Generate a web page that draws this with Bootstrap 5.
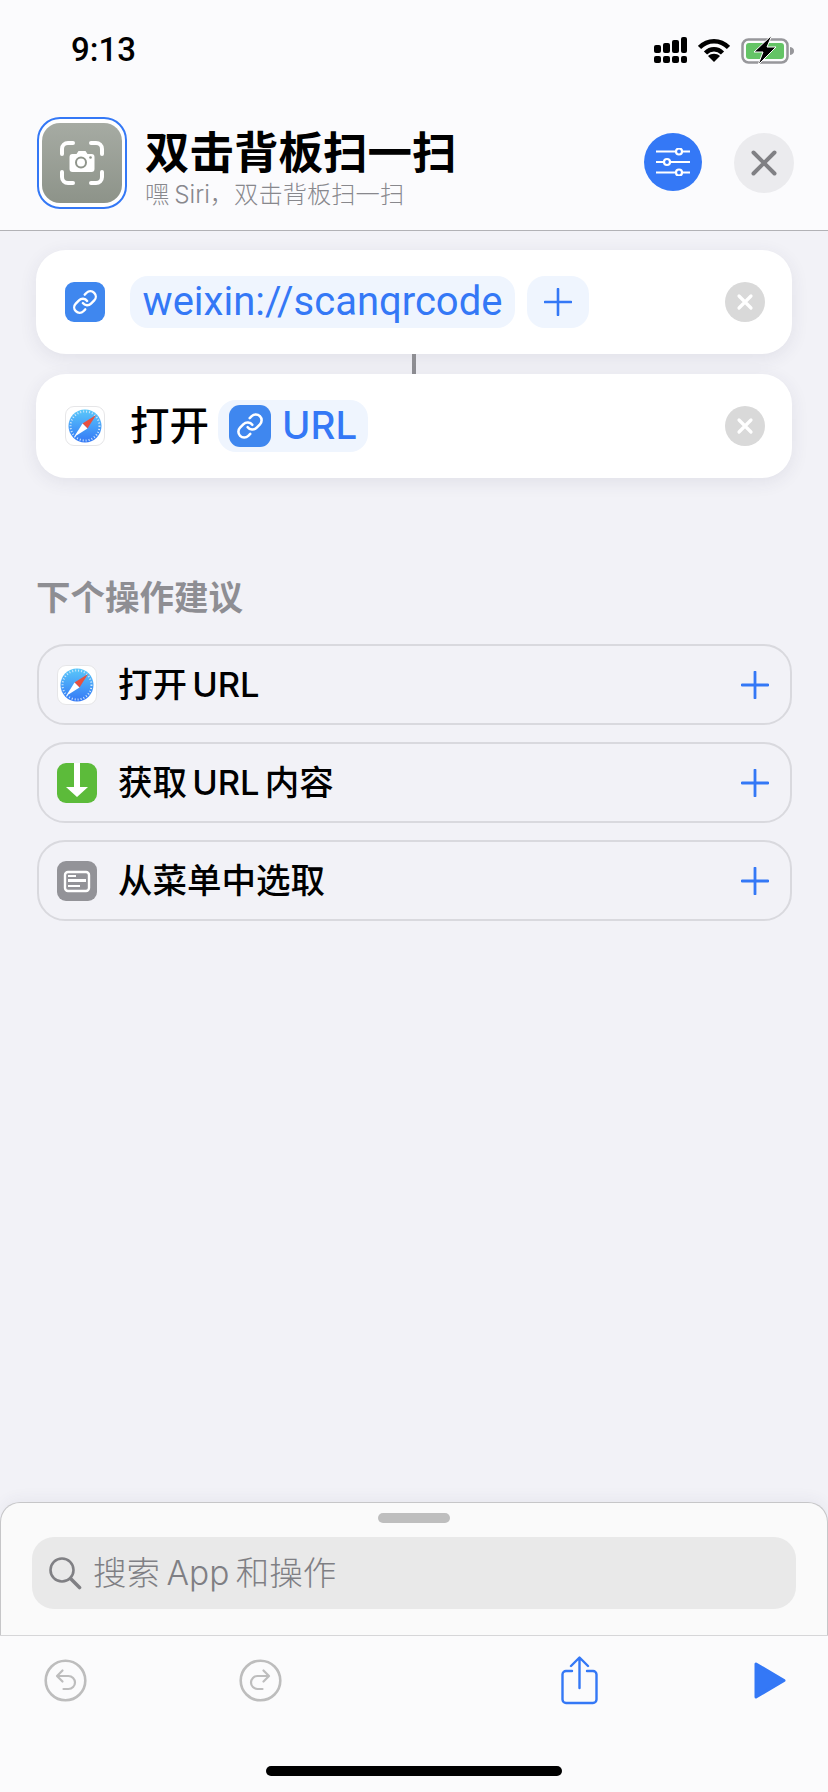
<!DOCTYPE html>
<html lang="zh-CN">
<head>
    <meta charset="UTF-8">
    <meta name="viewport" content="width=device-width, initial-scale=1.0">
    <title>双击背板扫一扫</title>
    <link href="https://cdn.jsdelivr.net/npm/bootstrap@5.3.0/dist/css/bootstrap.min.css" rel="stylesheet">
    <style>
        body {
            background: #f2f2f7;
            font-family: Inter, "Noto Sans CJK SC", sans-serif;
            color: #000;
        }
        .page-wrap { height: 1792px; }

        /* header */
        .top-head {
            height: 231px;
            background: #fbfbfd;
            border-bottom: 1px solid #b2b2b6;
        }
        .status-row { height: 117px; padding: 0 33px 0 71px; }
        .status-time { font-family: Roboto, sans-serif; font-size: 33px; font-weight: 500; line-height: 100px; }
        .status-icons { height: 100px; gap: 11px; }
        .head-row { padding: 0 34px 0 37px; height: 92px; }
        .app-tile {
            width: 90px;
            height: 92px;
            border: 2px solid #3478f6;
            border-radius: 23px;
            padding: 4px 3px;
            background: #fff;
            flex-shrink: 0;
        }
        .app-tile-inner {
            width: 100%;
            height: 100%;
            border-radius: 18px;
            background: linear-gradient(#a6aba3, #8d9389);
        }
        .head-text { margin-left: 18px; }
        .head-title { font-size: 44.5px; font-weight: 700; line-height: 56px; margin-top: 7px; }
        .head-sub { font-size: 24.3px; line-height: 30px; color: #88888d; margin-top: -2px; font-weight: 300; word-spacing: -2px; }
        .round-btn { width: 60px; height: 60px; flex-shrink: 0; }
        .btn-tune { width: 58px; height: 58px; background: #3478f6; margin-right: 32px; margin-top: -2px; }
        .btn-shut { background: #ebebee; }

        /* action cards */
        .flow-area { padding: 19px 36px 0; }
        .step-card {
            height: 104px;
            background: #fff;
            border-radius: 30px;
            padding: 0 27px 0 29px;
            box-shadow: 0 4px 18px rgba(60, 60, 90, .09);
        }
        .step-link { width: 4px; height: 20px; background: #8e8e93; }
        .tile-40 { width: 40px; height: 40px; flex-shrink: 0; }
        .tile-link { background: #3f87ef; border-radius: 9px; }
        .step-pill {
            height: 52px;
            background: #eff5fe;
            border-radius: 18px;
            color: #3478f6;
        }
        .pill-url { width: 385px; margin-left: 25px; font-family: Roboto, sans-serif; font-size: 40px; }
        .pill-plus { width: 62px; margin-left: 12px; }
        .step-word { font-size: 39.5px; margin-left: 25px; line-height: 52px; font-weight: 500; }
        .pill-var { width: 150px; margin-left: 9px; padding-left: 11px; font-weight: 500; font-size: 38.5px; }
        .tile-var { width: 42px; height: 42px; background: #3f87ef; border-radius: 11px; margin-right: 11px; }
        .step-drop { width: 40px; height: 40px; background: #d9d9d9; flex-shrink: 0; }

        /* suggestions */
        .hint-head {
            font-size: 34.5px;
            font-weight: 700;
            color: #8e8e93;
            line-height: 40px;
            margin: 100px 0 26px 0;
        }
        .hint-row {
            height: 81px;
            margin: 0 0 17px 1px;
            border: 2px solid #d9d9de;
            border-radius: 28px;
            padding: 0 21px 0 18px;
        }
        .hint-name { font-size: 34.5px; font-weight: 500; margin-left: 21px; word-spacing: -4px; }
        .tile-green { background: #5cbb3a; border-radius: 9px; }
        .tile-gray { background: #939398; border-radius: 9px; }

        /* search sheet */
        .search-sheet {
            height: 133px;
            background: #fafafa;
            border: 1px solid #c6c6c8;
            border-bottom: 0;
            border-radius: 20px 20px 0 0;
            padding: 0 31px;
            box-shadow: 0 -4px 14px rgba(60, 60, 90, .05);
        }
        .sheet-grip { width: 72px; height: 10px; background: #bebebe; margin: 10px auto 14px; }
        .search-field {
            height: 72px;
            background: #e9e9e9;
            border-radius: 22px;
            padding-left: 16px;
            font-size: 33.5px;
            font-weight: 300;
            color: #7f7f84;
        }
        .search-word { margin-left: 11px; word-spacing: -3px; }

        /* bottom toolbar */
        .tool-bar { height: 157px; background: #fbfbfc; border-top: 1px solid #d6d6d8; }
        .tool-row { height: 88px; padding: 0 42px 0 44px; }
        .tool-left { gap: 152px; }
        .tool-right { gap: 156px; }
        .home-bar { width: 296px; height: 10px; background: #000; margin: 42px auto 0; }
    </style>
</head>
<body>
<div class="page-wrap d-flex flex-column">

    <!-- Header -->
    <header class="top-head flex-shrink-0">
        <div class="status-row d-flex justify-content-between align-items-start">
            <span class="status-time">9:13</span>
            <div class="status-icons d-flex align-items-center">
                <svg width="33" height="26" viewBox="0 0 33 26">
                    <g fill="#000">
                        <rect x="0" y="8" width="7" height="8" rx="2"/><rect x="0" y="19" width="7" height="7" rx="2"/>
                        <rect x="9" y="6" width="7" height="10" rx="2"/><rect x="9" y="19" width="7" height="7" rx="2"/>
                        <rect x="18" y="3" width="7" height="13" rx="2"/><rect x="18" y="19" width="7" height="7" rx="2"/>
                        <rect x="27" y="0" width="6" height="16" rx="2"/><rect x="27" y="19" width="6" height="7" rx="2"/>
                    </g>
                </svg>
                <svg width="32" height="24" viewBox="0 0 32 24">
                    <g fill="none" stroke="#000" stroke-width="4.500">
                        <path d="M1.500 9.500C9.500 1 22.500 1 30.500 9.500"/>
                        <path d="M7.500 15C12.500 10 19.500 10 24.500 15"/>
                    </g>
                    <path d="M16 24l-6-6c3.500-3 8.500-3 12 0z" fill="#000"/>
                </svg>
                <svg width="54" height="30" viewBox="0 0 54 30" class="ms-n1">
                    <rect x="1.500" y="4.500" width="45" height="23" rx="6" fill="none" stroke="#97979b" stroke-width="2.500"/>
                    <rect x="5" y="8" width="38" height="16" rx="3" fill="#64c466"/>
                    <path d="M49 12c3 .5 4 2 4 4s-1 3.500-4 4z" fill="#97979b"/>
                    <path d="M31 0L13 17h9l-5 13 18-18h-9z" fill="#000" stroke="#fff" stroke-width="1"/>
                </svg>
            </div>
        </div>
        <div class="head-row d-flex align-items-center">
            <div class="app-tile">
                <div class="app-tile-inner d-flex align-items-center justify-content-center">
                    <svg width="44" height="44" viewBox="0 0 44 44">
                        <path d="M2 13V8a6 6 0 0 1 6-6h5M31 2h5a6 6 0 0 1 6 6v5M42 31v5a6 6 0 0 1-6 6h-5M13 42H8a6 6 0 0 1-6-6v-5" fill="none" stroke="#fff" stroke-width="4" stroke-linecap="round"/>
                        <path d="M12.500 13h4l2-3h7l2 3h4a3 3 0 0 1 3 3v12a3 3 0 0 1-3 3h-19a3 3 0 0 1-3-3V16a3 3 0 0 1 3-3z" fill="#fff"/>
                        <circle cx="21" cy="21.500" r="5" fill="#fff" stroke="#8f958b" stroke-width="2"/>
                        <circle cx="30.500" cy="16.500" r="1.300" fill="#8f958b"/>
                    </svg>
                </div>
            </div>
            <div class="head-text flex-grow-1">
                <div class="head-title">双击背板扫一扫</div>
                <div class="head-sub">嘿 Siri，双击背板扫一扫</div>
            </div>
            <div class="round-btn btn-tune rounded-circle d-flex align-items-center justify-content-center">
                <svg width="34" height="28" viewBox="0 0 34 28">
                    <g stroke="#fff" stroke-width="2.200" fill="#3478f6">
                        <path d="M0 3.500h34M0 14h34M0 24.500h34"/>
                        <circle cx="23" cy="3.500" r="3"/>
                        <circle cx="11" cy="14" r="3"/>
                        <circle cx="23" cy="24.500" r="3"/>
                    </g>
                </svg>
            </div>
            <div class="round-btn btn-shut rounded-circle d-flex align-items-center justify-content-center">
                <svg width="26" height="26" viewBox="0 0 26 26">
                    <path d="M2.500 2.500l21 21M23.500 2.500l-21 21" stroke="#808084" stroke-width="4" stroke-linecap="round"/>
                </svg>
            </div>
        </div>
    </header>

    <!-- Actions -->
    <main class="flow-area flex-grow-1">
        <div class="step-card d-flex align-items-center">
            <div class="tile-40 tile-link d-flex align-items-center justify-content-center">
                <svg width="26" height="26" viewBox="0 0 24 24" fill="none" stroke="#fff" stroke-width="2.200" stroke-linecap="round" stroke-linejoin="round">
                    <path d="M10 13a5 5 0 0 0 7.540.54l3-3a5 5 0 0 0-7.070-7.070l-1.720 1.710"/>
                    <path d="M14 11a5 5 0 0 0-7.540-.54l-3 3a5 5 0 0 0 7.070 7.070l1.710-1.710"/>
                </svg>
            </div>
            <div class="step-pill pill-url d-flex align-items-center justify-content-center">weixin://scanqrcode</div>
            <div class="step-pill pill-plus d-flex align-items-center justify-content-center">
                <svg width="28" height="28" viewBox="0 0 28 28"><path d="M14 1v26M1 14h26" stroke="#3478f6" stroke-width="2.600" stroke-linecap="round"/></svg>
            </div>
            <div class="step-drop rounded-circle ms-auto d-flex align-items-center justify-content-center">
                <svg width="18" height="18" viewBox="0 0 18 18"><path d="M3 3l12 12M15 3L3 15" stroke="#fff" stroke-width="3.200" stroke-linecap="round"/></svg>
            </div>
        </div>
        <div class="step-link mx-auto"></div>
        <div class="step-card d-flex align-items-center">
            <svg class="tile-40" viewBox="0 0 40 40">
                <use href="#safari-mark"/>
            </svg>
            <span class="step-word">打开</span>
            <div class="step-pill pill-var d-flex align-items-center">
                <div class="tile-var d-flex align-items-center justify-content-center">
                    <svg width="28" height="28" viewBox="0 0 24 24" fill="none" stroke="#fff" stroke-width="2.200" stroke-linecap="round" stroke-linejoin="round">
                        <path d="M10 13a5 5 0 0 0 7.540.54l3-3a5 5 0 0 0-7.070-7.070l-1.720 1.710"/>
                        <path d="M14 11a5 5 0 0 0-7.540-.54l-3 3a5 5 0 0 0 7.070 7.070l1.710-1.710"/>
                    </svg>
                </div>
                URL
            </div>
            <div class="step-drop rounded-circle ms-auto d-flex align-items-center justify-content-center">
                <svg width="18" height="18" viewBox="0 0 18 18"><path d="M3 3l12 12M15 3L3 15" stroke="#fff" stroke-width="3.200" stroke-linecap="round"/></svg>
            </div>
        </div>

        <!-- Suggestions -->
        <div class="hint-head">下个操作建议</div>
        <div class="hint-row d-flex align-items-center">
            <svg class="tile-40" viewBox="0 0 40 40"><use href="#safari-mark"/></svg>
            <span class="hint-name">打开 URL</span>
            <svg class="ms-auto" width="28" height="28" viewBox="0 0 28 28"><path d="M14 1v26M1 14h26" stroke="#3478f6" stroke-width="2.800" stroke-linecap="round"/></svg>
        </div>
        <div class="hint-row d-flex align-items-center">
            <svg class="tile-40 tile-green" viewBox="0 0 40 40">
                <path d="M17 0h6v24h8L20 34 9 24h8z" fill="#fff"/>
            </svg>
            <span class="hint-name">获取 URL 内容</span>
            <svg class="ms-auto" width="28" height="28" viewBox="0 0 28 28"><path d="M14 1v26M1 14h26" stroke="#3478f6" stroke-width="2.800" stroke-linecap="round"/></svg>
        </div>
        <div class="hint-row d-flex align-items-center">
            <svg class="tile-40 tile-gray" viewBox="0 0 40 40">
                <rect x="8" y="11" width="24" height="19" rx="3" fill="none" stroke="#fff" stroke-width="2.400"/>
                <rect x="11" y="14" width="8" height="2" fill="#fff"/>
                <rect x="11" y="18" width="18" height="3" fill="#fff"/>
                <rect x="11" y="24" width="12" height="2" fill="#fff"/>
            </svg>
            <span class="hint-name">从菜单中选取</span>
            <svg class="ms-auto" width="28" height="28" viewBox="0 0 28 28"><path d="M14 1v26M1 14h26" stroke="#3478f6" stroke-width="2.800" stroke-linecap="round"/></svg>
        </div>
    </main>

    <!-- Search sheet -->
    <section class="search-sheet flex-shrink-0">
        <div class="sheet-grip rounded-pill"></div>
        <div class="search-field d-flex align-items-center">
            <svg width="34" height="34" viewBox="0 0 34 34" fill="none" stroke="#808084">
                <circle cx="14" cy="14" r="11.500" stroke-width="2.600"/>
                <path d="M22.500 22.500l9 9" stroke-width="3.600" stroke-linecap="round"/>
            </svg>
            <span class="search-word">搜索 App 和操作</span>
        </div>
    </section>

    <!-- Toolbar -->
    <footer class="tool-bar flex-shrink-0">
        <div class="tool-row d-flex justify-content-between align-items-center">
            <div class="tool-left d-flex align-items-center">
                <svg width="43" height="43" viewBox="0 0 43 43" fill="none" stroke="#bdbdbd">
                    <circle cx="21.500" cy="21.500" r="19.800" stroke-width="2.600"/>
                    <path d="M18.500 11.500l-5.500 5.500 5.500 5.500M13.500 17h11a6.500 6.500 0 0 1 0 13h-5" stroke-width="2.200" stroke-linecap="round" stroke-linejoin="round"/>
                </svg>
                <svg width="43" height="43" viewBox="0 0 43 43" fill="none" stroke="#bdbdbd">
                    <circle cx="21.500" cy="21.500" r="19.800" stroke-width="2.600"/>
                    <path d="M24.500 11.500l5.500 5.500-5.500 5.500M29.500 17h-11a6.500 6.500 0 0 0 0 13h5" stroke-width="2.200" stroke-linecap="round" stroke-linejoin="round"/>
                </svg>
            </div>
            <div class="tool-right d-flex align-items-center">
                <svg width="37" height="49" viewBox="0 0 37 49" fill="none" stroke="#3478f6" stroke-width="2.400" stroke-linecap="round" stroke-linejoin="round">
                    <path d="M11 15H5a3.500 3.500 0 0 0-3.500 3.500v25A3.500 3.500 0 0 0 5 47h27a3.500 3.500 0 0 0 3.500-3.500v-25A3.500 3.500 0 0 0 32 15h-6"/>
                    <path d="M18.500 32V2M10 10l8.500-8.500L27 10"/>
                </svg>
                <svg width="32" height="37" viewBox="0 0 32 37">
                    <path d="M2 2v33l28-16.500z" fill="#3478f6" stroke="#3478f6" stroke-width="3" stroke-linejoin="round"/>
                </svg>
            </div>
        </div>
        <div class="home-bar rounded-pill"></div>
    </footer>
</div>

<!-- shared safari glyph -->
<svg width="0" height="0" class="d-block">
    <defs>
        <linearGradient id="safari-blue" x1="0" y1="0" x2="0" y2="1">
            <stop offset="0" stop-color="#5ac8fa"/>
            <stop offset="1" stop-color="#3478f6"/>
        </linearGradient>
        <g id="safari-mark">
            <rect x=".5" y=".5" width="39" height="39" rx="8.500" fill="#fff" stroke="#e6e6e8"/>
            <circle cx="20" cy="20" r="16.500" fill="url(#safari-blue)"/>
            <circle cx="20" cy="20" r="14.500" fill="none" stroke="#cfe6fb" stroke-width="2" stroke-dasharray="1 2"/>
            <path d="M31 9L17.500 17.500 22.500 22.500z" fill="#e8503f"/>
            <path d="M9 31L17.500 17.500 22.500 22.500z" fill="#fff"/>
        </g>
    </defs>
</svg>

<script src="https://cdn.jsdelivr.net/npm/bootstrap@5.3.0/dist/js/bootstrap.bundle.min.js"></script>
</body>
</html>
